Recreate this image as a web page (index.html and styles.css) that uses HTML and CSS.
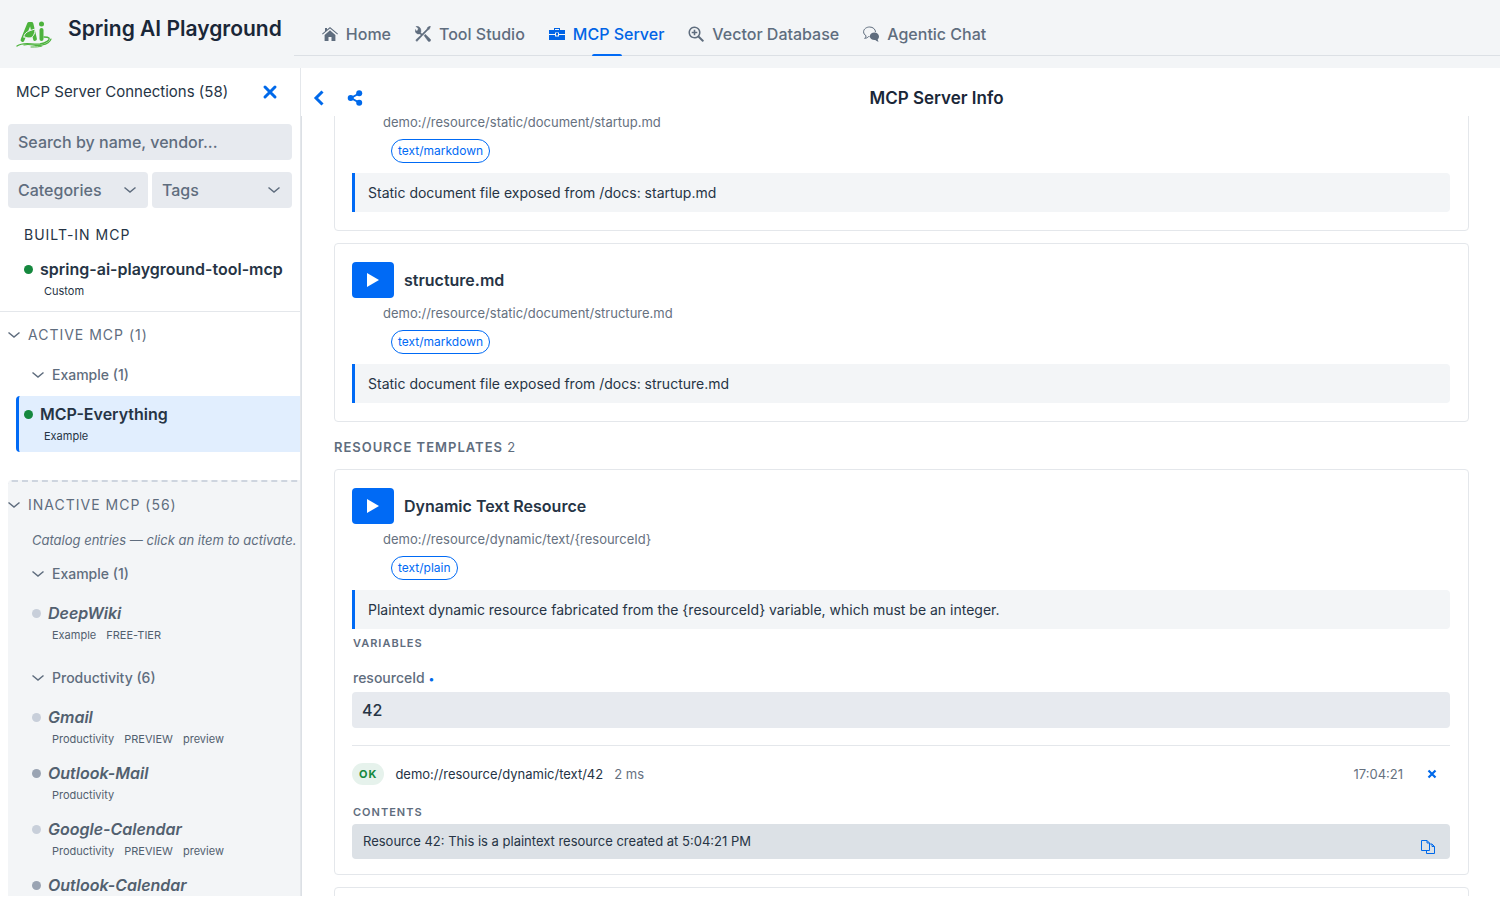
FILE: index.html
```
<!DOCTYPE html>
<html lang="en">
<head>
    <meta charset="UTF-8">
    <meta name="viewport" content="width=device-width, initial-scale=1.0">
    <title>Spring AI Playground</title>
    <link rel="stylesheet" href="styles.css">
</head>
<body>
    <header class="navbar">
        <svg class="logo" viewBox="0 0 36 28" fill="none" stroke="#4db33d" stroke-linecap="round">
            <path d="M6.500 20 L13 4 H15.500 L19 19" stroke-width="3.800" stroke-linejoin="round"/>
            <path d="M8 17c0-5 5-6 11-8 0 5-2 9-6 9-2 0-3-1-5-1z" fill="#4db33d" stroke="#f3f5f7" stroke-width="1"/>
            <path d="M25.500 10v9" stroke-width="4"/>
            <circle cx="25.500" cy="4" r="2.500" fill="#4db33d" stroke="none"/>
            <path d="M1 26c7-5 15-1 23-2 6-1 10-4 9-6-1-1-3-1-5-1" stroke-width="1.300"/>
            <path d="M8 25c7-2 11 2 18 0 5-1 8-3 9-6" stroke-width="1.200"/>
            <path d="M15 27c5 0 8 0 11-1" stroke-width="1"/>
        </svg>
        <h1>Spring AI Playground</h1>
        <nav class="tabs">
            <a href="#home" class="tab">
                <svg class="icon" viewBox="0 0 16 16"><path d="M8 4.200 2.600 9v6H6.500v-4h3v4h3.900V9z"/><path d="M16 7.700 8 1 5 3.500V2H3v3.200L0 7.700l.7.800L8 2.500l7.300 6z"/></svg>
                Home
            </a>
            <a href="#tools" class="tab">
                <svg class="icon" viewBox="0 0 16 16" stroke="currentColor" stroke-width=".4"><path d="M10.300 8.200 9 9.500l4 5.500c.5.700 1.500.8 2.200.2s.6-1.600 0-2.200z"/><path d="M15.500.5 14.800 0l-2.300 1.500-.5 1.500-5 5L5.700 6.700C6.200 5 6 3 4.800 1.600 3.700.4 2.200 0 .8.2L3.300 2.600 2.700 4.500.7 5 .1 3.200C-.3 4.700.4 6.300 1.500 7.200c1 .9 2.300 1 3.500.7l1.100 1.100-5.400 5 1.200 1.500 5.600-6L13 4l1.300-.7z"/></svg>
                Tool Studio
            </a>
            <a href="#mcp" class="tab active">
                <svg class="icon" viewBox="0 0 16 16"><path fill-rule="evenodd" d="M11 4V2H5v2H0v4h6V6.500h4V8h6V4zm-1 0H6V3h4z"/><path d="M10 9v1.500H6V9H0v5h16V9z"/><path d="M7 7h2v2.500H7z"/></svg>
                MCP Server
            </a>
            <a href="#vector" class="tab">
                <svg class="icon" viewBox="0 0 16 16"><path fill-rule="evenodd" d="M15.700 14.300 11.400 10A6 6 0 1 0 10 11.400l4.300 4.300c.2.200.5.200.7 0l.7-.7a.5.5 0 0 0 0-.7zM6.500 11a4.500 4.500 0 1 1 0-9 4.500 4.500 0 0 1 0 9z"/><path d="M7.300 3.700H5.700v2H3.700v1.600h2v2h1.600v-2h2V5.700h-2z"/></svg>
                Vector Database
            </a>
            <a href="#chat" class="tab">
                <svg class="icon" viewBox="0 0 16 16"><path d="M12.500 6C12.500 3.300 10 1 6.700 1S.6 3 .6 5.800c0 1.700 1 3.100 2.500 4 0 1-.5 1.900-1.500 2.500 1.700 0 3.100-.7 3.900-1.700h1" fill="none" stroke="currentColor"/><path d="M11.500 6.500C9 6.500 6.800 8.200 6.800 10.300S9 14 11.500 14h.8c.7.800 1.800 1.500 3.400 1.500-.7-.6-1-1.300-1-2.200.9-.7 1.300-1.700 1.300-2.800 0-2.300-2-4-4.500-4z"/></svg>
                Agentic Chat
            </a>
        </nav>
    </header>

    <div class="layout">
        <aside class="sidebar">
            <div class="sidebar-head">
                <h2>MCP Server Connections (58)</h2>
                <button class="icon-btn" aria-label="Close">
                    <svg class="icon" viewBox="0 0 16 16"><path d="M3 3l10 10M13 3 3 13" stroke="currentColor" stroke-width="3" stroke-linecap="round"/></svg>
                </button>
            </div>
            <div class="filters">
                <input type="text" class="field search" aria-label="Search" placeholder="Search by name, vendor...">
                <select class="field" aria-label="Categories"><option>Categories</option></select>
                <select class="field" aria-label="Tags"><option>Tags</option></select>
            </div>

            <section class="builtin">
                <h3 class="caption">BUILT-IN MCP</h3>
                <div class="server">
                    <div class="server-name"><span class="dot on"></span>spring-ai-playground-tool-mcp</div>
                    <div class="server-meta"><span>Custom</span></div>
                </div>
            </section>

            <details class="group active-group" open>
                <summary class="caption"><svg class="chevron" viewBox="0 0 12 8"><path d="m.5 1.500 5.500 4.500 5.500-4.500"/></svg>ACTIVE MCP (1)</summary>
                <details class="subgroup" open>
                    <summary><svg class="chevron" viewBox="0 0 12 8"><path d="m.5 1.500 5.500 4.500 5.500-4.500"/></svg>Example (1)</summary>
                    <div class="server selected">
                        <div class="server-name"><span class="dot on"></span>MCP-Everything</div>
                        <div class="server-meta"><span>Example</span></div>
                    </div>
                </details>
            </details>

            <details class="group inactive-group" open>
                <summary class="caption"><svg class="chevron" viewBox="0 0 12 8"><path d="m.5 1.500 5.500 4.500 5.500-4.500"/></svg>INACTIVE MCP (56)</summary>
                <p class="hint">Catalog entries — click an item to activate.</p>
                <details class="subgroup" open>
                    <summary><svg class="chevron" viewBox="0 0 12 8"><path d="m.5 1.500 5.500 4.500 5.500-4.500"/></svg>Example (1)</summary>
                    <div class="server">
                        <div class="server-name"><span class="dot"></span>DeepWiki</div>
                        <div class="server-meta"><span>Example</span><span>FREE-TIER</span></div>
                    </div>
                </details>
                <details class="subgroup" open>
                    <summary><svg class="chevron" viewBox="0 0 12 8"><path d="m.5 1.500 5.500 4.500 5.500-4.500"/></svg>Productivity (6)</summary>
                    <div class="server">
                        <div class="server-name"><span class="dot"></span>Gmail</div>
                        <div class="server-meta"><span>Productivity</span><span>PREVIEW</span><span>preview</span></div>
                    </div>
                    <div class="server">
                        <div class="server-name"><span class="dot dark"></span>Outlook-Mail</div>
                        <div class="server-meta"><span>Productivity</span></div>
                    </div>
                    <div class="server">
                        <div class="server-name"><span class="dot"></span>Google-Calendar</div>
                        <div class="server-meta"><span>Productivity</span><span>PREVIEW</span><span>preview</span></div>
                    </div>
                    <div class="server">
                        <div class="server-name"><span class="dot dark"></span>Outlook-Calendar</div>
                    </div>
                </details>
            </details>
        </aside>

        <main class="main">
            <div class="main-head">
                <button class="icon-btn" aria-label="Back">
                    <svg class="icon" viewBox="0 0 16 16"><path d="M11.500 1.500 5 8l6.500 6.500" fill="none" stroke="currentColor" stroke-width="3"/></svg>
                </button>
                <button class="icon-btn" aria-label="Share">
                    <svg class="icon" viewBox="0 0 16 16"><path d="M12 3.500 4 8l8 4.500" fill="none" stroke="currentColor" stroke-width="2"/><circle cx="12.200" cy="3.200" r="3"/><circle cx="3.700" cy="8" r="3"/><circle cx="12.200" cy="12.800" r="3"/></svg>
                </button>
                <h2>MCP Server Info</h2>
            </div>

            <div class="content" id="content">
                <article class="card">
                    <div class="card-head">
                        <button class="run-btn" aria-label="Run"><svg viewBox="0 0 12 14"><path d="M0 0v14l12-7z"/></svg></button>
                        <h3>startup.md</h3>
                    </div>
                    <div class="uri">demo://resource/static/document/startup.md</div>
                    <span class="mime">text/markdown</span>
                    <p class="description">Static document file exposed from /docs: startup.md</p>
                </article>

                <article class="card">
                    <div class="card-head">
                        <button class="run-btn" aria-label="Run"><svg viewBox="0 0 12 14"><path d="M0 0v14l12-7z"/></svg></button>
                        <h3>structure.md</h3>
                    </div>
                    <div class="uri">demo://resource/static/document/structure.md</div>
                    <span class="mime">text/markdown</span>
                    <p class="description">Static document file exposed from /docs: structure.md</p>
                </article>

                <h3 class="section-title">RESOURCE TEMPLATES <span>2</span></h3>

                <article class="card expanded">
                    <div class="card-head">
                        <button class="run-btn" aria-label="Run"><svg viewBox="0 0 12 14"><path d="M0 0v14l12-7z"/></svg></button>
                        <h3>Dynamic Text Resource</h3>
                    </div>
                    <div class="uri">demo://resource/dynamic/text/{resourceId}</div>
                    <span class="mime">text/plain</span>
                    <p class="description">Plaintext dynamic resource fabricated from the {resourceId} variable, which must be an integer.</p>

                    <h4 class="label">VARIABLES</h4>
                    <label class="var-label" for="resourceId">resourceId <span>•</span></label>
                    <input type="text" class="field var-input" id="resourceId" value="42">

                    <div class="result">
                        <div class="result-head">
                            <span class="status">OK</span>
                            <span>demo://resource/dynamic/text/42</span>
                            <span class="muted">2 ms</span>
                            <time class="muted">17:04:21</time>
                            <button class="clear-btn" aria-label="Clear">
                                <svg viewBox="0 0 10 10"><path d="M1.500 1.500l7 7M8.500 1.500l-7 7" stroke="currentColor" stroke-width="2.200"/></svg>
                            </button>
                        </div>
                        <h4 class="label">CONTENTS</h4>
                        <div class="output">
                            <span>Resource 42: This is a plaintext resource created at 5:04:21 PM</span>
                            <button class="copy-btn" aria-label="Copy">
                                <svg viewBox="0 0 16 16" fill="none" stroke="currentColor"><path d="M6 11.500H1.500v-10H7L9.500 4v7.500H6zM7 1.500V4h2.500"/><path d="M9.500 5H12l2.500 2.500v7h-8v-3M12 5v2.500h2.500"/></svg>
                            </button>
                        </div>
                    </div>
                </article>

                <article class="card">
                    <div class="card-head"></div>
                </article>
            </div>
        </main>
    </div>

    <script>
        document.getElementById('content').scrollTop = 64;
    </script>
</body>
</html>
```
FILE: styles.css
```
* {
    margin: 0;
    padding: 0;
    box-sizing: border-box;
}

body {
    font-family: Inter, 'Liberation Sans', sans-serif;
    font-size: 16px;
    line-height: 20px;
    height: 100vh;
    padding-bottom: 4px;
    display: flex;
    flex-direction: column;
    overflow: hidden;
    background: #fff;
    color: #263445;
}

button {
    border: none;
    background: none;
    color: #0069ea;
    cursor: pointer;
}

.icon {
    width: 16px;
    height: 16px;
    fill: currentColor;
}

/* top bar */
.navbar {
    flex: none;
    display: flex;
    height: 68px;
    padding-left: 16px;
    background: #f3f5f7;
}

.logo {
    width: 36px;
    height: 28px;
    margin-top: 20px;
}

.navbar h1 {
    margin: 15px 12px 0 16px;
    font-size: 21px;
    line-height: 28px;
    font-weight: 600;
    color: #1a2738;
    white-space: nowrap;
}

.tabs {
    flex: 1;
    display: flex;
    gap: 24px;
    height: 56px;
    padding: 12px 28px 0;
    border-bottom: 1px solid #dce0e5;
}

.tab {
    position: relative;
    display: flex;
    align-items: center;
    gap: 8px;
    font-weight: 500;
    color: #5f6d7e;
    text-decoration: none;
    white-space: nowrap;
}

.tab.active {
    color: #0064e6;
}

.tab.active::after {
    content: "";
    position: absolute;
    bottom: -1px;
    left: 50%;
    width: 30px;
    height: 2px;
    margin-left: -15px;
    border-radius: 2px 2px 0 0;
    background: #006af5;
}

.layout {
    flex: 1;
    display: flex;
    min-height: 0;
}

/* sidebar */
.sidebar {
    flex: none;
    width: 301px;
    border-right: 1px solid #e4e7eb;
    overflow: hidden;
}

.sidebar-head {
    display: flex;
    align-items: center;
    justify-content: space-between;
    height: 48px;
    padding: 0 12px 0 16px;
}

.sidebar-head h2 {
    font-size: 15px;
    font-weight: 400;
}

.icon-btn {
    width: 36px;
    height: 36px;
}

.icon-btn .icon {
    display: block;
    margin: auto;
}

.filters {
    display: grid;
    grid-template-columns: 1fr 1fr;
    gap: 12px 4px;
    padding: 8px;
}

.field {
    width: 100%;
    height: 36px;
    padding: 0 10px;
    border: none;
    border-radius: 4px;
    background: #e7eaef;
    font: inherit;
    font-weight: 500;
    color: #5f6d7e;
}

.field::placeholder {
    color: #5f6d7e;
}

select.field {
    appearance: none;
    background: #e7eaef url("data:image/svg+xml,%3Csvg xmlns='http://www.w3.org/2000/svg' width='12' height='8' fill='none' stroke='%235f6d7e' stroke-width='1.500'%3E%3Cpath d='m.5 1.500 5.500 4.500 5.500-4.500'/%3E%3C/svg%3E") no-repeat right 12px center;
}

.search {
    grid-column: 1 / -1;
}

.caption {
    font-size: 14px;
    font-weight: 400;
    letter-spacing: 1px;
}

.builtin {
    padding: 9px 0 4px;
    border-bottom: 1px solid #e4e7eb;
}

.builtin .caption {
    padding: 0 24px 6px;
}

.server {
    height: 56px;
    padding: 8px 0 0 24px;
}

.server-name {
    display: flex;
    align-items: center;
    gap: 7px;
    font-weight: 600;
    white-space: nowrap;
}

.dot {
    width: 9px;
    height: 9px;
    border-radius: 50%;
    background: #c8cfda;
}

.dot.on {
    background: #15883e;
}

.dot.dark {
    background: #9aa4b3;
}

.server-meta {
    display: flex;
    gap: 10px;
    margin-top: 4px;
    padding-left: 20px;
    font-size: 11px;
    line-height: 16px;
}

.group summary {
    display: flex;
    align-items: center;
    gap: 8px;
    height: 40px;
    color: #5f6d7e;
    list-style: none;
    cursor: pointer;
}

.chevron {
    width: 12px;
    height: 8px;
    fill: none;
    stroke: currentColor;
    stroke-width: 1.5;
}

.active-group {
    padding: 3px 0 28px 8px;
}

.subgroup summary {
    margin-bottom: 1px;
    padding-left: 24px;
    font-size: 14px;
    font-weight: 500;
}

.selected {
    margin-left: 8px;
    padding-left: 5px;
    border-left: 3px solid #006af5;
    border-radius: 4px 0 0 4px;
    background: #e1eefe;
}

.inactive-group {
    margin-left: 8px;
    border-top: 2px dashed #ced5df;
    border-radius: 4px 0 0 0;
    background: #f3f5f7;
}

.inactive-group > summary {
    height: 46px;
}

.inactive-group .subgroup {
    margin-bottom: 7px;
}

.inactive-group .server {
    color: #52606f;
}

.inactive-group .server-name {
    font-style: italic;
}

.hint {
    padding: 2px 0 4px 24px;
    font-size: 13px;
    font-style: italic;
    color: #5f6d7e;
    white-space: nowrap;
}

/* main view */
.main {
    flex: 1;
    display: flex;
    flex-direction: column;
    min-width: 0;
}

.main-head {
    flex: none;
    display: flex;
    align-items: center;
    height: 48px;
    padding-top: 12px;
}

.main-head h2 {
    flex: 1;
    font-size: 17px;
    font-weight: 600;
    text-align: center;
    color: #1a2738;
}

.content {
    flex: 1;
    min-height: 0;
    padding: 0 31px 0 32px;
    border-left: 1px solid #dce0e5;
    overflow: auto;
    scrollbar-width: none;
}

.card {
    margin-bottom: 12px;
    padding: 18px 18px 18px 17px;
    border: 1px solid #e4e7eb;
    border-radius: 4px;
}

.card-head {
    display: flex;
    align-items: center;
    gap: 10px;
    height: 36px;
}

.card-head h3 {
    font-size: 16px;
    font-weight: 600;
}

.run-btn {
    width: 42px;
    height: 36px;
    border-radius: 4px;
    background: #006af5;
}

.run-btn svg {
    display: block;
    width: 12px;
    height: 14px;
    margin: auto;
    fill: #fff;
}

.uri {
    margin: 6px 0 8px 31px;
    font-size: 13px;
    line-height: 18px;
    color: #66717f;
}

.mime {
    display: block;
    width: fit-content;
    margin-left: 39px;
    padding: 0 6px;
    border: 1px solid #006af5;
    border-radius: 12px;
    font-size: 12px;
    line-height: 22px;
    color: #006af5;
}

.description {
    margin-top: 10px;
    padding: 10px 13px 9px;
    border-left: 3px solid #006af5;
    border-radius: 0 4px 4px 0;
    background: #f3f5f7;
    font-size: 14px;
}

.section-title {
    margin: 15px 0 12px;
    font-size: 13px;
    font-weight: 600;
    letter-spacing: 1px;
    color: #5f6d7e;
}

.section-title span {
    font-weight: 400;
}

.card.expanded {
    padding-bottom: 15px;
}

.label {
    padding-left: 1px;
    font-size: 11px;
    line-height: 16px;
    font-weight: 600;
    letter-spacing: 1px;
    color: #5f6d7e;
}

.expanded > .label {
    margin-top: 6px;
}

.var-label {
    display: block;
    margin: 17px 0 3px 1px;
    font-size: 14px;
    font-weight: 500;
    color: #5f6d7e;
}

.var-label span {
    color: #0069ea;
    font-size: 11px;
}

.var-input {
    display: block;
    color: #263445;
}

.result {
    margin-top: 17px;
    padding-top: 17px;
    border-top: 1px solid #e4e7eb;
}

.result-head {
    display: flex;
    align-items: center;
    gap: 11px;
    height: 22px;
    margin-bottom: 19px;
    font-size: 13px;
}

.status {
    padding: 0 7px;
    border-radius: 11px;
    background: #e6f2ec;
    font-size: 11px;
    line-height: 22px;
    font-weight: 700;
    letter-spacing: 1px;
    color: #15883e;
}

.muted {
    color: #66717f;
}

.result-head time {
    margin-left: auto;
}

.clear-btn {
    width: 36px;
    height: 22px;
}

.clear-btn svg {
    display: block;
    width: 10px;
    height: 10px;
    margin: auto;
}

.output {
    display: flex;
    justify-content: space-between;
    height: 35px;
    margin-top: 4px;
    padding: 7px 14px 0 11px;
    border-radius: 4px;
    background: #dce1e6;
    font-size: 13px;
}

.copy-btn {
    width: 16px;
    height: 16px;
    margin-top: 8px;
}

.copy-btn svg {
    display: block;
}
```
